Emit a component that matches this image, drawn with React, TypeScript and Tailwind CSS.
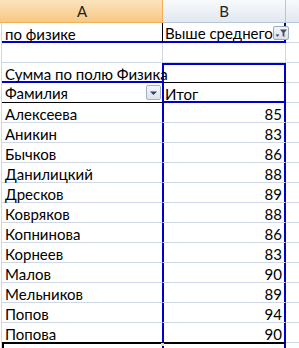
import type { ReactNode } from 'react';

const students: [string, number][] = [
  ['Алексеева', 85],
  ['Аникин', 83],
  ['Бычков', 86],
  ['Данилицкий', 88],
  ['Дресков', 89],
  ['Ковряков', 88],
  ['Копнинова', 86],
  ['Корнеев', 83],
  ['Малов', 90],
  ['Мельников', 89],
  ['Попов', 94],
  ['Попова', 90],
];

function FilterButton() {
  return (
    <span className="w-[16px] h-[14px] rounded-[2px] border border-[#9aa8ba] bg-gradient-to-b from-[#f4f6f9] to-[#d9dfe7] flex items-center justify-center">
      <svg width="14" height="12" viewBox="0 0 14 12">
        <path d="M1.5 7.5h4l-2 2.2z" fill="#2a3f7a" />
        <path d="M6 2.5h7l-2.6 3.2v4.3l-1.8-1v-3.3z" fill="#4a4f57" />
      </svg>
    </span>
  );
}

function DropButton() {
  return (
    <span className="w-[15px] h-[15px] rounded-[2px] border border-[#a3b0c0] bg-gradient-to-b from-[#f5f7fa] to-[#dde3ea] flex items-center justify-center">
      <svg width="9" height="6" viewBox="0 0 9 6">
        <path d="M1 1.5h7l-3.5 3.5z" fill="#2a3f7a" />
      </svg>
    </span>
  );
}

function Row({
  a,
  b,
  aCls = '',
  bCls = '',
  children,
}: {
  a?: ReactNode;
  b?: ReactNode;
  aCls?: string;
  bCls?: string;
  children?: ReactNode;
}) {
  return (
    <div className="flex h-5">
      <div className="w-[2px] border-r border-[#d0d7e5]" />
      <div className={`relative w-[161px] border-r border-b border-[#d0d7e5] flex items-center pl-[3px] pt-[2px] whitespace-nowrap ${aCls}`}>
        {a}
        {children}
      </div>
      <div className={`w-[123px] border-r border-b border-[#d0d7e5] flex items-center pt-[2px] whitespace-nowrap ${bCls}`}>
        {b}
      </div>
      <div className="flex-1 border-b border-[#d0d7e5]" />
    </div>
  );
}

export default function App() {
  return (
    <div className="w-[299px] h-[348px] overflow-hidden bg-white text-[15px] leading-[18px] text-black" style={{ fontFamily: 'Lato, "Liberation Sans", Arial, sans-serif' }}>
      {/* column headers */}
      <div className="flex h-[23px] text-[#222] text-[15px]">
        <div className="w-[163px] border-r border-b border-[#f0b055] bg-gradient-to-b from-[#fbe3bc] to-[#f7c882] flex items-center justify-center pl-[2px]">
          A
        </div>
        <div className="w-[123px] border-r border-b border-[#b7c6d9] bg-gradient-to-b from-[#f8fafc] to-[#e2e8f1] flex items-center justify-center">
          B
        </div>
        <div className="flex-1 border-b border-[#b7c6d9] bg-gradient-to-b from-[#f8fafc] to-[#e2e8f1]" />
      </div>

      <Row
        a="по физике"
        aCls="!border-r-black !border-b-[#0000cc] shadow-[inset_0_-1px_0_#0000cc]"
        b={
          <span className="flex items-center justify-between w-full pl-[2px] pr-[1px]">
            Выше среднего
            <FilterButton />
          </span>
        }
        bCls="!border-b-[#0000cc] !border-r-[#0000cc] shadow-[inset_0_-1px_0_#0000cc,inset_-1px_0_0_#0000cc] !pt-0"
      />
      <Row />
      <Row
        a="Сумма по полю Физика"
        aCls="!border-r-[#0000cc] !border-b-[#0000cc] shadow-[inset_0_-1px_0_#0000cc]"
        bCls="!border-b-black !border-r-[#0000cc] shadow-[inset_0_2px_0_#0000cc,inset_1px_0_0_#0000cc,inset_-1px_0_0_#0000cc]"
      />
      <Row
        a={
          <span className="flex items-center justify-between w-full pr-[1px]">
            Фамилия
            <DropButton />
          </span>
        }
        aCls="!border-r-[#0000cc] !border-b-black !pt-0"
        b={<span className="pl-[2px]">Итог</span>}
        bCls="!border-b-[#0000cc] !border-r-[#0000cc] shadow-[inset_0_-1px_0_#0000cc,inset_1px_0_0_#0000cc,inset_-1px_0_0_#0000cc]"
      />

      {students.map(([name, score], i) => (
        <Row
          key={name}
          a={name}
          aCls={`!border-r-[#0000cc] ${i === students.length - 1 ? '!border-b-black' : ''}`}
          b={<span className="w-full text-right pr-[3px]">{score}</span>}
          bCls={`!border-r-[#0000cc] shadow-[inset_1px_0_0_#0000cc,inset_-1px_0_0_#0000cc] ${i === students.length - 1 ? '!border-b-black' : ''}`}
        />
      ))}

      {/* active cell below the pivot table */}
      <Row
        aCls="!border-r-[#0000cc] shadow-[inset_0_1px_0_#000,inset_2px_0_0_#000]"
        bCls="!border-r-[#0000cc] shadow-[inset_0_1px_0_#000,inset_1px_0_0_#0000cc,inset_-1px_0_0_#0000cc]"
      >
        <span className="absolute right-[-2px] top-0 w-[3px] h-[3px] bg-[#f5e84a]" />
      </Row>
    </div>
  );
}
